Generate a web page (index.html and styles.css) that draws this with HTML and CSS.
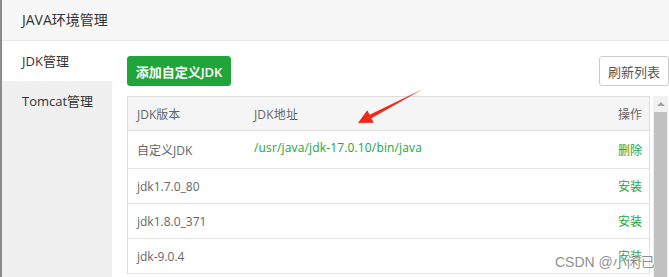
FILE: index.html
```html
<!DOCTYPE html>
<html lang="zh-CN">
<head>
<meta charset="utf-8">
<title>JAVA环境管理</title>
<link rel="stylesheet" href="styles.css">
</head>
<body>
<div class="app">
  <div class="edge"></div>
  <div class="window">
    <div class="header">JAVA环境管理</div>
    <div class="main">
      <nav class="sidebar">
        <div class="nav-item active">JDK管理</div>
        <div class="nav-item">Tomcat管理</div>
      </nav>
      <section class="content">
        <div class="toolbar">
          <button class="btn btn-green">添加自定义JDK</button>
          <button class="btn btn-default">刷新列表</button>
        </div>
        <div class="grid-wrap">
          <div class="table">
            <div class="row head">
              <div class="c-name">JDK版本</div>
              <div class="c-path">JDK地址</div>
              <div class="c-op">操作</div>
            </div>
            <div class="row first">
              <div class="c-name">自定义JDK</div>
              <div class="c-path link up">/usr/java/jdk-17.0.10/bin/java</div>
              <div class="c-op link">删除</div>
            </div>
            <div class="row">
              <div class="c-name">jdk1.7.0_80</div>
              <div class="c-path"></div>
              <div class="c-op link">安装</div>
            </div>
            <div class="row">
              <div class="c-name">jdk1.8.0_371</div>
              <div class="c-path"></div>
              <div class="c-op link">安装</div>
            </div>
            <div class="row">
              <div class="c-name">jdk-9.0.4</div>
              <div class="c-path"></div>
              <div class="c-op link">安装</div>
            </div>
          </div>
          <div class="scrollbar">
            <div class="sb-up"></div>
            <div class="sb-thumb"></div>
          </div>
        </div>
      </section>
    </div>
  </div>
  <svg class="arrow" width="669" height="277" viewBox="0 0 669 277">
    <polygon points="358,123 367.2,110.3 369.6,114.7 423,89 371.4,118.3 373.8,122.7" fill="#ee2a1d"/>
  </svg>
  <div class="watermark">CSDN @小闲已</div>
</div>
</body>
</html>
```
FILE: styles.css
```css
* { box-sizing: border-box; }
html, body { margin: 0; padding: 0; }
body {
  width: 669px;
  height: 277px;
  overflow: hidden;
  background: #fff;
  font-family: "Open Sans", "Noto Sans CJK SC", sans-serif;
  color: #333;
}
.app {
  position: relative;
  display: flex;
  width: 669px;
  height: 277px;
}
.edge {
  width: 2px;
  flex: none;
  background: #8c8c8c;
}
.window {
  flex: 1;
  display: flex;
  flex-direction: column;
  min-width: 0;
}
.header {
  height: 41px;
  flex: none;
  background: #f7f7f7;
  border-bottom: 1px solid #e8e8e8;
  padding-left: 20px;
  font-size: 14px;
  line-height: 40px;
  color: #333;
}
.main {
  flex: 1;
  display: flex;
  min-height: 0;
}
.sidebar {
  width: 110px;
  flex: none;
  background: #f0f0f0;
}
.nav-item {
  height: 40px;
  line-height: 40px;
  padding-left: 20px;
  font-size: 13px;
  color: #333;
}
.nav-item.active { background: #fff; }
.content {
  flex: 1;
  padding: 15px 0 0 15px;
  min-width: 0;
}
.toolbar {
  display: flex;
  justify-content: space-between;
  align-items: center;
  height: 30px;
  margin-bottom: 10px;
}
.btn {
  font-family: inherit;
  height: 30px;
  border-radius: 3px;
  padding: 0;
  font-size: 13px;
  white-space: nowrap;
  cursor: pointer;
}
.btn-green {
  width: 104px;
  background: #20a53a;
  border: 1px solid #20a53a;
  color: #fff;
  font-weight: 600;
}
.btn-default {
  width: 70px;
  background: #fff;
  border: 1px solid #ccc;
  color: #555;
}
.grid-wrap {
  display: flex;
  align-items: flex-start;
}
.table {
  width: 523px;
  flex: none;
  border: 1px solid #ddd;
  border-bottom: none;
  font-size: 12px;
  color: #666;
}
.row {
  display: flex;
  align-items: center;
  height: 35px;
  border-bottom: 1px solid #e3e3e3;
}
.row.head {
  height: 34px;
  background: #f5f5f5;
  border-bottom-color: #e0e0e0;
}
.row.first { height: 38px; }
.c-name { width: 126px; padding-left: 9px; flex: none; }
.c-path { flex: 1; letter-spacing: 0.15px; }
.c-op { width: 60px; text-align: right; padding-right: 7px; flex: none; }
.link { color: #20a53a; }
.up { margin-top: -4px; }
.scrollbar {
  width: 15px;
  height: 181px;
  margin-left: 3px;
  background: #f1f1f1;
  display: flex;
  flex-direction: column;
  align-items: center;
}
.sb-up {
  width: 0;
  height: 0;
  margin-top: 6px;
  border-left: 4px solid transparent;
  border-right: 4px solid transparent;
  border-bottom: 4px solid #a3a3a3;
}
.sb-thumb {
  margin-top: 6px;
  width: 13px;
  flex: 1;
  background: #c1c1c1;
}
.arrow {
  position: absolute;
  left: 0;
  top: 0;
  pointer-events: none;
}
.watermark {
  position: absolute;
  left: 555px;
  top: 251px;
  font-family: "Liberation Sans", "Noto Sans CJK SC", sans-serif;
  font-size: 14px;
  color: rgba(120, 120, 120, 0.85);
  text-shadow: 0 0 2px #fff, 0 0 2px #fff;
  white-space: nowrap;
}
```
